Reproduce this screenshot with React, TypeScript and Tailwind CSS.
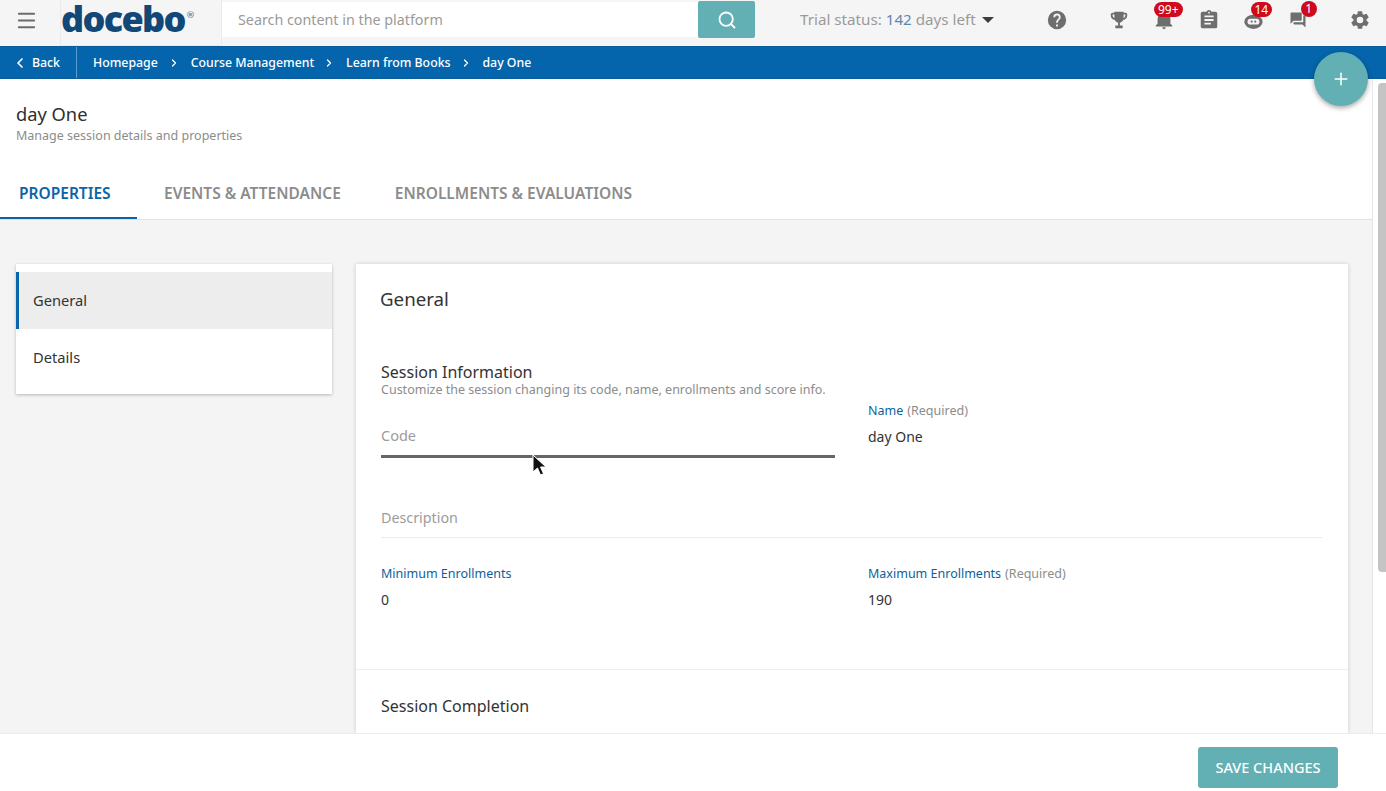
import * as React from 'react'
import { ChevronLeft, ChevronRight, Menu, Plus, Search } from 'lucide-react'

const teal = 'bg-[#62b0b3]'

function Badge({ children, className }: { children: React.ReactNode; className: string }) {
  return (
    <span
      className={`absolute flex items-center justify-center rounded-full bg-[#cf0a1d] text-[12px] leading-none text-white ${className}`}
    >
      {children}
    </span>
  )
}

function TopIcon({
  children,
  className,
  badge,
  svgClass = 'h-[22px] w-[22px]',
}: {
  children: React.ReactNode
  className: string
  badge?: React.ReactNode
  svgClass?: string
}) {
  return (
    <div className={`relative flex h-[20px] w-[20px] items-center justify-center ${className}`}>
      <svg viewBox="0 0 24 24" className={`shrink-0 fill-[#6e6e6e] ${svgClass}`}>
        {children}
      </svg>
      {badge}
    </div>
  )
}

function TopBar() {
  return (
    <header className="flex h-[46px] items-start bg-[#f5f5f5]">
      <button className="ml-[14px] mt-[9px] flex h-[22px] w-[24px] items-center justify-center text-[#6b6b6b]">
        <Menu size={23} strokeWidth={2} />
      </button>
      <div className="ml-[22px] flex h-[46px] w-[162px] items-start border-x border-b border-[#ebebeb] bg-[#f5f5f5] font-['Lato',sans-serif] text-[36px] font-black leading-[37px] tracking-[-1.7px] text-[#114878]">
        <span>docebo</span>
        <span className="ml-[2px] mt-[10px] text-[9px] leading-[10px] tracking-normal text-[#7f97ad]">®</span>
      </div>
      <div className="mt-[2px] flex h-[35px] w-[476px] items-center bg-white pl-[16px] text-[14.3px] text-[#9a9a9a]">
        Search content in the platform
      </div>
      <button className={`mt-[1px] flex h-[37px] w-[57px] items-center justify-center rounded-[2px] text-white ${teal}`}>
        <Search size={20} strokeWidth={2.2} />
      </button>
      <div className="ml-[45px] mt-[9px] flex h-[20px] items-center text-[15.2px] text-[#9a9a9a]">
        Trial status:&nbsp;<span className="text-[#5d88ab]">142</span>&nbsp;days left
        <span className="ml-[6px] mt-[1px] h-0 w-0 border-x-[6px] border-t-[6px] border-x-transparent border-t-[#3d3d3d]" />
      </div>
      <div className="mt-[10px] flex items-start">
        <TopIcon className="ml-[53px]">
          <path d="M12 2a10 10 0 1 0 0 20 10 10 0 0 0 0-20zm1 17h-2v-2h2v2zm2.07-7.75-.9.92C13.45 12.9 13 13.5 13 15h-2v-.5c0-1.1.45-2.1 1.17-2.83l1.24-1.26A2 2 0 1 0 10 9H8a4 4 0 1 1 8 0c0 .88-.36 1.68-.93 2.25z" />
        </TopIcon>
        <TopIcon className="ml-[42px]">
          <path d="M19 4h-2V3H7v1H5a2 2 0 0 0-2 2v1c0 2.55 1.92 4.63 4.39 4.94A5 5 0 0 0 11 14.9V18H8v3h8v-3h-3v-3.1a5 5 0 0 0 3.61-2.96C19.08 11.63 21 9.55 21 7V6a2 2 0 0 0-2-2zM5 7V6h2v3.82A3 3 0 0 1 5 7zm14 0a3 3 0 0 1-2 2.82V6h2v1z" />
        </TopIcon>
        <TopIcon
          className="ml-[25px]"
          badge={<Badge className="-top-[8px] left-0 h-[15px] w-[29px]">99+</Badge>}
        >
          <path d="M12 22a2 2 0 0 0 2-2h-4a2 2 0 0 0 2 2zm7-6v-5c0-3.07-1.63-5.64-5-6.32V4a2 2 0 0 0-4 0v.68C6.64 5.36 5 7.92 5 11v5l-2 2v1h18v-1l-2-2z" />
        </TopIcon>
        <TopIcon className="ml-[25px]">
          <path d="M19 3h-4.18A3 3 0 0 0 12 1a3 3 0 0 0-2.82 2H5a2 2 0 0 0-2 2v14c0 1.1.9 2 2 2h14a2 2 0 0 0 2-2V5a2 2 0 0 0-2-2zm-7 0a1 1 0 1 1 0 2 1 1 0 0 1 0-2zm2 14H7v-2h7v2zm3-4H7v-2h10v2zm0-4H7V7h10v2z" />
        </TopIcon>
        <TopIcon
          className="ml-[24px]"
          badge={<Badge className="-top-[8px] left-[8px] h-[15px] w-[21px]">14</Badge>}
        >
          <ellipse cx="12.5" cy="14" rx="10" ry="7.7" />
          <rect x="6" y="10.5" width="13" height="6.5" rx="3.2" className="fill-[#f5f5f5]" />
          <circle cx="10.5" cy="13.7" r="1.2" />
          <circle cx="14.5" cy="13.7" r="1.2" />
        </TopIcon>
        <TopIcon
          className="ml-[25px]"
          svgClass="h-[18px] w-[18px]"
          badge={<Badge className="-top-[9px] left-[13px] h-[16px] w-[16px]">1</Badge>}
        >
          <path d="M21 6h-2v9H6v2c0 .55.45 1 1 1h11l4 4V7c0-.55-.45-1-1-1zm-4 6V3c0-.55-.45-1-1-1H3c-.55 0-1 .45-1 1v14l4-4h10c.55 0 1-.45 1-1z" />
        </TopIcon>
        <TopIcon className="ml-[42px]">
          <path d="M19.14 12.94c.04-.3.06-.61.06-.94s-.02-.64-.07-.94l2.03-1.58a.5.5 0 0 0 .12-.64l-1.92-3.32a.5.5 0 0 0-.61-.22l-2.39.96a7 7 0 0 0-1.62-.94l-.36-2.54a.5.5 0 0 0-.48-.42h-3.84a.5.5 0 0 0-.48.42l-.36 2.54c-.59.24-1.13.56-1.62.94l-2.39-.96a.5.5 0 0 0-.61.22L2.71 8.84a.5.5 0 0 0 .12.64l2.03 1.58c-.05.3-.09.63-.09.94s.02.64.07.94l-2.03 1.58a.5.5 0 0 0-.12.64l1.92 3.32c.12.22.37.29.61.22l2.39-.96c.5.38 1.03.7 1.62.94l.36 2.54c.05.24.24.42.48.42h3.84c.24 0 .44-.18.48-.42l.36-2.54c.59-.24 1.13-.56 1.62-.94l2.39.96c.22.08.47 0 .61-.22l1.92-3.32a.5.5 0 0 0-.12-.64l-2.01-1.58zM12 15.600A3.600 3.600 0 1 1 12 8.400a3.600 3.600 0 0 1 0 7.200z" />
        </TopIcon>
      </div>
    </header>
  )
}

function Breadcrumbs() {
  return (
    <nav className="flex h-[33px] items-center border-y border-[#0a5c9b] bg-[#0465ac] text-[12.3px] font-medium text-white">
      <div className="flex h-full w-[77px] items-center border-r border-[#5b9bcb] pl-[12px]">
        <ChevronLeft size={16} strokeWidth={2.5} />
        <span className="ml-[4px] pt-[2px]">Back</span>
      </div>
      <span className="ml-[16px] pt-[2px]">Homepage</span>
      <ChevronRight size={12} strokeWidth={2.5} className="ml-[10px]" />
      <span className="ml-[11px] pt-[2px]">Course Management</span>
      <ChevronRight size={12} strokeWidth={2.5} className="ml-[9px]" />
      <span className="ml-[11px] pt-[2px]">Learn from Books</span>
      <ChevronRight size={12} strokeWidth={2.5} className="ml-[9px]" />
      <span className="ml-[11px] pt-[2px]">day One</span>
    </nav>
  )
}

function Field({ label, required, value }: { label: string; required?: boolean; value: string }) {
  return (
    <div className="flex-1">
      <div className="text-[12.5px] leading-[18px] text-[#0b5f9e]">
        {label}
        {required && <span className="ml-[4px] text-[#8c8c8c]">(Required)</span>}
      </div>
      <div className="mt-[7px] text-[14px] leading-[20px] text-[#333333]">{value}</div>
    </div>
  )
}

function GeneralCard() {
  return (
    <section className="h-[469px] w-[992px] overflow-hidden bg-white shadow-[0_0_4px_rgba(0,0,0,0.18)]">
      <h2 className="ml-[24px] mt-[21px] text-[18.7px] font-normal leading-[28px] text-[#333333]">General</h2>
      <div className="ml-[25px] mr-[26px]">
        <h3 className="mt-[50px] text-[16px] font-normal leading-[18px] text-[#333333]">Session Information</h3>
        <p className="text-[12.5px] leading-[18px] text-[#8c8c8c]">
          Customize the session changing its code, name, enrollments and score info.
        </p>
        <div className="flex gap-[33px]">
          <div className="flex-1">
            <div className="mt-[16px] h-[43px] border-b-[3px] border-[#666666] pt-[10px] text-[14.500px] leading-[20px] text-[#9c9c9c]">
              Code
            </div>
          </div>
          <div className="mt-[3px] flex-1">
            <Field label="Name" required value="day One" />
          </div>
        </div>
        <div className="mt-[50px] h-[30px] border-b border-[#ececec] text-[14.300px] leading-[20px] text-[#9c9c9c]">
          Description
        </div>
        <div className="mt-[27px] flex gap-[33px]">
          <Field label="Minimum Enrollments" value="0" />
          <Field label="Maximum Enrollments" required value="190" />
        </div>
      </div>
      <div className="mt-[59px] border-t border-[#efefef] pl-[25px] pt-[24px] text-[16px] leading-[24px] text-[#333333]">
        Session Completion
      </div>
    </section>
  )
}

function PageBody() {
  return (
    <main className="flex h-[654px] overflow-hidden">
      <div className="w-[1372px]">
        <div className="h-[141px] border-b border-[#e2e2e2] bg-white">
          <h1 className="ml-[16px] pt-[21px] text-[18.3px] font-normal leading-[27px] text-[#2f2f2f]">day One</h1>
          <p className="ml-[16px] mt-[1px] text-[12.5px] leading-[16px] text-[#8c8c8c]">Manage session details and properties</p>
          <div className="mt-[27px] flex text-[15.500px] font-semibold leading-[44px]">
            <div className="h-[48px] w-[137px] border-b-2 border-[#0a64a8] pl-[19px] text-[#0a64a8]">PROPERTIES</div>
            <div className="ml-[27px] text-[#8c8c8c]">EVENTS &amp; ATTENDANCE</div>
            <div className="ml-[54px] text-[#8c8c8c]">ENROLLMENTS &amp; EVALUATIONS</div>
          </div>
        </div>
        <div className="flex h-[513px] items-start bg-[#f4f4f4] pl-[16px] pt-[44px]">
          <aside className="h-[130px] w-[316px] bg-white pt-[8px] text-[14.7px] text-[#333333] shadow-[0_1px_3px_rgba(0,0,0,0.25)]">
            <div className="flex h-[57px] items-center border-l-[3px] border-[#0a64a8] bg-[#ededed] pl-[14px]">General</div>
            <div className="flex h-[57px] items-center pl-[17px]">Details</div>
          </aside>
          <div className="ml-[24px]">
            <GeneralCard />
          </div>
        </div>
      </div>
      <div className="flex w-[14px] justify-end border-l border-[#e6e6e6] bg-white pt-[4px]">
        <div className="h-[489px] w-[8px] rounded-l-[4px] bg-[#c4c4c4]" />
      </div>
    </main>
  )
}

export default function App() {
  return (
    <div className="relative h-[791px] w-[1386px] overflow-hidden bg-white font-['Open_Sans',sans-serif]">
      <TopBar />
      <Breadcrumbs />
      <PageBody />
      <footer className="flex h-[58px] items-start justify-end border-t border-[#ececec] bg-white pr-[48px] pt-[13px]">
        <button className={`h-[41px] w-[140px] rounded-[3px] text-[14.500px] font-medium text-white ${teal}`}>
          SAVE CHANGES
        </button>
      </footer>

      <button className={`absolute left-[1314px] top-[52px] flex h-[54px] w-[54px] items-center justify-center rounded-full text-white shadow-[0_2px_5px_rgba(0,0,0,0.35)] ${teal}`}>
        <Plus size={20} strokeWidth={1.8} />
      </button>
      {/* mouse pointer from the recording */}
      <svg viewBox="0 0 14 24" className="absolute left-[532px] top-[454px] h-[24px] w-[14px]">
        <path d="M1 1v17l4.500-4 3 7 3-1.300-3-6.700H14z" fill="#111" stroke="#fff" strokeWidth="1" />
      </svg>
    </div>
  )
}
